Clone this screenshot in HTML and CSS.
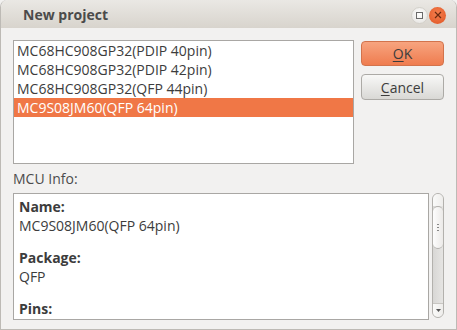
FILE: index.html
```html
<!DOCTYPE html>
<html lang="en">
<head>
    <meta charset="UTF-8">
    <title>New project</title>
    <link rel="stylesheet" href="styles.css">
</head>
<body>

<div class="window">

    <!-- Title bar -->
    <div class="titlebar">
        <span class="title">New project</span>
        <div class="title-buttons">
            <span class="tb-max"><span class="tb-square"></span></span>
            <span class="tb-close">
                <svg width="8" height="8" viewBox="0 0 8 8"><path d="M1 1L7 7M7 1L1 7" stroke="#6a2a10" stroke-width="1.2"/></svg>
            </span>
        </div>
    </div>

    <div class="content">
        <div class="top-row">
            <div class="mcu-list">
                <div class="item">MC68HC908GP32(PDIP 40pin)</div>
                <div class="item">MC68HC908GP32(PDIP 42pin)</div>
                <div class="item">MC68HC908GP32(QFP 44pin)</div>
                <div class="item selected">MC9S08JM60(QFP 64pin)</div>
            </div>
            <div class="buttons">
                <button class="btn btn-ok"><u>O</u>K</button>
                <button class="btn btn-cancel"><u>C</u>ancel</button>
            </div>
        </div>

        <div class="label">MCU Info:</div>

        <div class="info-row">
            <div class="info-box">
                <div class="info-key">Name:</div>
                <div>MC9S08JM60(QFP 64pin)</div>
                <div class="info-gap"></div>
                <div class="info-key">Package:</div>
                <div>QFP</div>
                <div class="info-gap"></div>
                <div class="info-key">Pins:</div>
            </div>
            <div class="scrollbar">
                <div class="sb-up"></div>
                <div class="sb-thumb"><span class="grip"></span></div>
                <div class="sb-track"></div>
                <div class="sb-down">
                    <svg width="5" height="3" viewBox="0 0 5 3"><path d="M0 0H5L2.5 3Z" fill="#555"/></svg>
                </div>
            </div>
        </div>
    </div>

</div>

</body>
</html>
```

FILE: styles.css
```css
body, html {
    margin: 0;
    height: 100%;
    overflow: hidden;
    background-color: #f2f1f0;
    font-family: "Open Sans", "DejaVu Sans", sans-serif;
    color: #3c3c3c;
}

.window {
    width: 455px;
    height: 329px;
    border: 1px solid #bdbab5;
    border-top: none;
    border-radius: 7px 7px 0 0;
    background-color: #f2f1f0;
    overflow: hidden;
}

/* Title bar */
.titlebar {
    height: 28px;
    display: flex;
    align-items: center;
    justify-content: space-between;
    background: linear-gradient(#eae8e4, #d8d4cd);
    border-radius: 7px 7px 0 0;
    padding: 0 10px 0 22px;
}

.title {
    font-weight: bold;
    font-size: 14px;
    color: #4b4b4b;
    margin-top: 1px;
}

.title-buttons {
    display: flex;
    align-items: center;
    gap: 1px;
    margin-top: 2px;
}

.tb-max {
    width: 15px;
    height: 15px;
    border-radius: 50%;
    background: radial-gradient(circle at 50% 40%, #ffffff, #e2e0dc);
    border: 1px solid #d3d0ca;
    display: flex;
    align-items: center;
    justify-content: center;
}

.tb-square {
    width: 5px;
    height: 5px;
    border: 1px solid #6a6a6a;
}

.tb-close {
    width: 17px;
    height: 17px;
    border-radius: 50%;
    background: radial-gradient(circle at 50% 40%, #f68150, #de5322);
    display: flex;
    align-items: center;
    justify-content: center;
}

/* Content */
.content {
    padding: 12px 0 0 12px;
    font-size: 14px;
}

.top-row {
    display: flex;
    gap: 7px;
}

.mcu-list {
    width: 339px;
    height: 122px;
    background-color: #fff;
    border: 1px solid #a9a7a4;
}

.item {
    height: 19px;
    line-height: 19px;
    padding-left: 3px;
    white-space: nowrap;
}

.item.selected {
    background-color: #f07746;
    color: #fff;
}

.buttons {
    display: flex;
    flex-direction: column;
    gap: 8px;
    padding-top: 1px;
}

.btn {
    width: 83px;
    height: 25px;
    border-radius: 4px;
    font-family: "Open Sans", "DejaVu Sans", sans-serif;
    font-size: 14px;
    color: #3c3c3c;
    padding: 0;
}

.btn-ok {
    background: linear-gradient(#f7a47f, #ef7c4f);
    border: 1px solid #d2734c;
}

.btn-cancel {
    height: 26px;
    background: linear-gradient(#f8f8f7, #d9d8d5);
    border: 1px solid #acaaa6;
}

.btn u {
    text-decoration-thickness: 1px;
    text-underline-offset: 2px;
}

.label {
    margin-top: 5px;
    height: 19px;
    line-height: 19px;
    color: #4c4c4c;
    margin-bottom: 5px;
}

.info-row {
    display: flex;
    gap: 3px;
}

.info-box {
    width: 409px;
    height: 122px;
    background-color: #fff;
    border: 1px solid #a9a7a4;
    padding: 3px 0 0 5px;
    overflow: hidden;
    line-height: 19px;
}

.info-key {
    font-weight: bold;
}

.info-gap {
    height: 13px;
}

/* Scroll bar */
.scrollbar {
    width: 10px;
    height: 123px;
    border: 1px solid #b3b1ad;
    border-radius: 6px;
    background: linear-gradient(90deg, #d8d7d5, #e6e5e3);
    display: flex;
    flex-direction: column;
    overflow: hidden;
}

.sb-up {
    height: 12px;
    background: linear-gradient(90deg, #fafaf9, #eeedeb);
}

.sb-thumb {
    height: 41px;
    border: 1px solid #b3b1ad;
    border-left: none;
    border-right: none;
    border-radius: 5px;
    background: linear-gradient(90deg, #fdfdfd, #eceae8);
    display: flex;
    align-items: center;
    justify-content: center;
}

.grip {
    width: 2px;
    height: 7px;
    background: repeating-linear-gradient(#888 0 1px, transparent 1px 3px);
}

.sb-track {
    flex: 1;
}

.sb-down {
    height: 13px;
    background: linear-gradient(90deg, #fafaf9, #eeedeb);
    border-top: 1px solid #c8c6c2;
    display: flex;
    align-items: center;
    justify-content: center;
}
```
